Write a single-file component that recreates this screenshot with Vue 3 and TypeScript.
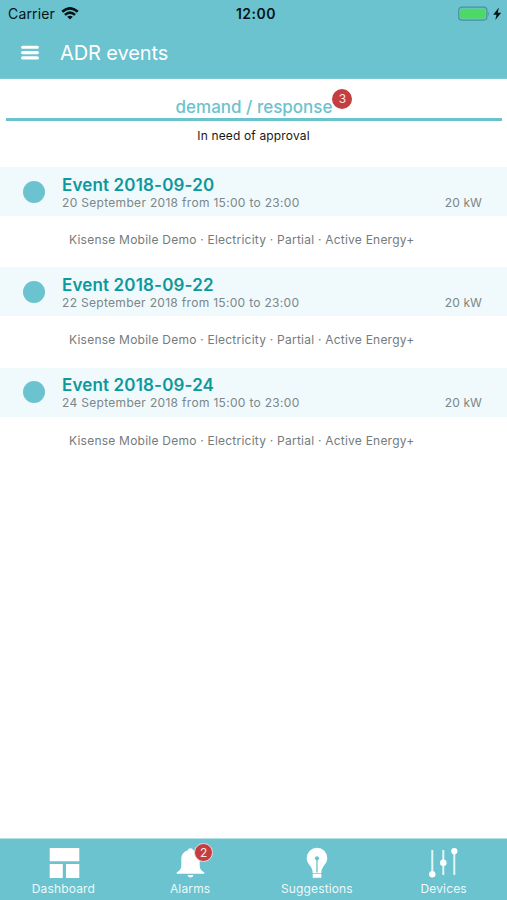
<script setup lang="ts">
interface AdrEvent {
  title: string
  period: string
  power: string
}

const details = 'Kisense Mobile Demo · Electricity · Partial · Active Energy+'
const events: AdrEvent[] = ['20', '22', '24'].map((day) => ({
  title: `Event 2018-09-${day}`,
  period: `${day} September 2018 from 15:00 to 23:00`,
  power: '20 kW',
}))
</script>

<template>
  <div class="screen">
    <header class="header">
      <div class="status">
        <div class="carrier">
          <span>Carrier</span>
          <svg class="wifi" width="18" height="13" viewBox="0 0 18 13">
            <g fill="none" stroke="#061317" stroke-width="2.6">
              <path d="M1.2 4.8Q9-2.2 16.8 4.8" />
              <path d="M3.9 7.9Q9 3.4 14.1 7.9" />
            </g>
            <path d="M6.2 9.8Q9 7.5 11.8 9.8L9 12.5Z" fill="#061317" />
          </svg>
        </div>
        <span class="clock">12:00</span>
        <div class="power-state">
          <svg width="44" height="16" viewBox="0 0 44 16">
            <rect x=".7" y="1.2" width="28.2" height="13" rx="3.2" fill="none" stroke="#4b929b" stroke-width="1.2" />
            <rect x="2.3" y="2.8" width="25" height="9.8" rx="1.6" fill="#4cd964" />
            <path d="M30.2 5.5q1.8 2.2 0 4.4z" fill="#4b929b" />
            <path d="M40.9 1.6L35.2 8.8H38.5L37.3 14L43.2 6.8H39.7Z" fill="#061317" />
          </svg>
        </div>
      </div>
      <div class="titlebar">
        <svg class="menu" width="18" height="16" viewBox="0 0 18 16">
          <path d="M1.6 2.3H16.4M1.6 7.6H16.4M1.6 12.9H16.4" stroke="#fff" stroke-width="3.1" stroke-linecap="round" />
        </svg>
        <h1>ADR events</h1>
      </div>
    </header>

    <main class="content">
      <div class="section-head">
        <h2>demand / response<span class="badge">3</span></h2>
      </div>
      <p class="hint">In need of approval</p>

      <article v-for="event in events" :key="event.title" class="event">
        <div class="band">
          <span class="dot"></span>
          <div class="event-text">
            <h3>{{ event.title }}</h3>
            <div class="meta">
              <span>{{ event.period }}</span>
              <span class="kw">{{ event.power }}</span>
            </div>
          </div>
        </div>
        <p class="details">{{ details }}</p>
      </article>
    </main>

    <nav class="tabs">
      <a class="tab">
        <svg class="dashboard-icon" width="32" height="32" viewBox="-1 0 32 32" fill="#fff">
          <path d="M.7 1H30.3V14.2H.7ZM.7 17H13.8V31H.7ZM17 17H30.3V31H17Z" />
        </svg>
        <span class="tab-label">Dashboard</span>
      </a>
      <a class="tab">
        <span class="tab-icon">
          <svg width="30" height="32" viewBox="0 0 30 32" fill="#fff">
            <path d="M15.5 1.3C13.9 1.3 13.1 2.2 12.9 3.3C8.7 4.4 6.3 7.8 6.3 12V18.5C6.3 22.3 4.3 23.5 1.7 25.6V26.7H29.3V25.6C26.7 23.5 24.7 22.3 24.7 18.5V12C24.7 7.8 22.3 4.4 18.1 3.3C17.9 2.2 17.1 1.3 15.5 1.3ZM12.5 28H18.5Q17.8 30.6 15.5 30.6T12.5 28Z" />
          </svg>
          <span class="badge alarm-badge">2</span>
        </span>
        <span class="tab-label">Alarms</span>
      </a>
      <a class="tab">
        <svg width="30" height="32" viewBox="0 0 30 32">
          <path d="M15 .8A10.3 10.3 0 0 0 4.7 11.1C4.7 15.2 7.2 17.6 8.9 20.1C10.2 22 10.6 23.8 10.7 26H19.3C19.4 23.8 19.8 22 21.1 20.1C22.8 17.6 25.3 15.2 25.3 11.1A10.3 10.3 0 0 0 15 .8Z" fill="#fff" />
          <path d="M10.7 26.7H19.3V30.8H10.7Z" fill="#fff" />
          <circle cx="15" cy="11.3" r="2.1" fill="#6ac3ce" />
          <path d="M15 12V25.5" stroke="#6ac3ce" stroke-width="1.3" />
        </svg>
        <span class="tab-label">Suggestions</span>
      </a>
      <a class="tab">
        <svg width="30" height="32" viewBox="0 0 30 32">
          <path d="M3.3 3V28M14.3 3V28M25.3 3V28" stroke="#e2f5f7" stroke-width="2" />
          <g fill="#fff">
            <circle cx="3.3" cy="27.2" r="3.2" />
            <circle cx="14.3" cy="15.7" r="3.3" />
            <circle cx="25.3" cy="4.2" r="3.1" />
          </g>
        </svg>
        <span class="tab-label">Devices</span>
      </a>
    </nav>
  </div>
</template>

<style>
body {
  margin: 0;
}
</style>

<style scoped>
.screen {
  display: flex;
  flex-direction: column;
  width: 507px;
  height: 900px;
  overflow: hidden;
  background: #fff;
  font-family: Inter, "Liberation Sans", sans-serif;
}
h1, h2, h3, p {
  margin: 0;
}
.header {
  box-sizing: border-box;
  height: 79px;
  flex: none;
  background: #6ac3ce;
  border-bottom: 1px solid #7bcbd4;
}
.status {
  display: grid;
  grid-template-columns: 1fr auto 1fr;
  align-items: center;
  height: 27px;
  padding: 0 5px 0 8px;
  color: #061317;
  font-size: 14px;
  line-height: 27px;
}
.carrier {
  display: flex;
  align-items: center;
  gap: 6px;
  letter-spacing: 0.15px;
}
.clock {
  padding-left: 2px;
  font-weight: 600;
  letter-spacing: 0.5px;
}
.power-state {
  display: flex;
  justify-content: flex-end;
}
.titlebar {
  display: flex;
  align-items: center;
  height: 52px;
  padding-left: 21px;
}
.menu {
  margin-right: 21px;
}
h1 {
  color: #fff;
  font-size: 20px;
  font-weight: 400;
  line-height: 52px;
  letter-spacing: -0.1px;
}
.content {
  flex: 1;
}
.section-head {
  display: flex;
  justify-content: center;
  box-sizing: border-box;
  height: 42px;
  margin: 0 5px 0 6px;
  padding-top: 17px;
  border-bottom: 3px solid #6ac3ce;
}
h2 {
  position: relative;
  color: #6ac3ce;
  font-size: 17px;
  font-weight: 500;
  line-height: 23px;
}
.badge {
  position: absolute;
  top: -7px;
  left: 100%;
  width: 20px;
  height: 20px;
  border-radius: 50%;
  background: #c43d40;
  color: #f8e6e6;
  font-size: 12px;
  font-weight: 400;
  line-height: 20px;
  letter-spacing: 0;
  text-align: center;
}
.hint {
  height: 46px;
  color: #171717;
  font-size: 12px;
  line-height: 29px;
  letter-spacing: 0.15px;
  text-align: center;
}
.event {
  height: 100.3px;
}
.band {
  display: flex;
  align-items: center;
  height: 49px;
  padding: 0 25px 0 23px;
  background: #f0f9fc;
}
.dot {
  width: 22px;
  height: 22px;
  border-radius: 50%;
  background: #6ac3ce;
}
.event-text {
  flex: 1;
  margin-left: 17px;
  padding-top: 2px;
}
h3 {
  color: #0d989c;
  font-size: 17px;
  font-weight: 600;
  line-height: 20px;
  letter-spacing: 0.15px;
}
.meta {
  display: flex;
  justify-content: space-between;
  color: #7b8788;
  font-size: 12px;
  line-height: 16px;
  letter-spacing: 0.31px;
}
.kw {
  letter-spacing: 0.1px;
}
.details {
  padding-left: 69px;
  color: #747b7c;
  font-size: 12px;
  line-height: 47px;
  letter-spacing: 0.23px;
  white-space: nowrap;
}
.tabs {
  display: grid;
  grid-template-columns: repeat(4, 1fr);
  box-sizing: border-box;
  height: 62px;
  flex: none;
  border-top: 1px solid #b4e0e6;
  background: #6ac3ce;
}
.tab {
  display: flex;
  flex-direction: column;
  align-items: center;
  padding-top: 8px;
  color: #edf9fa;
}
.tab svg {
  display: block;
}
.tab .dashboard-icon {
  margin-left: 2px;
}
.tab-icon {
  position: relative;
}
.alarm-badge {
  top: -4px;
  left: 19px;
  width: 17px;
  height: 17px;
  border: 1px solid #f0d6d5;
  line-height: 17px;
}
.tab-label {
  font-size: 12px;
  line-height: 19px;
  letter-spacing: 0.15px;
}
</style>
